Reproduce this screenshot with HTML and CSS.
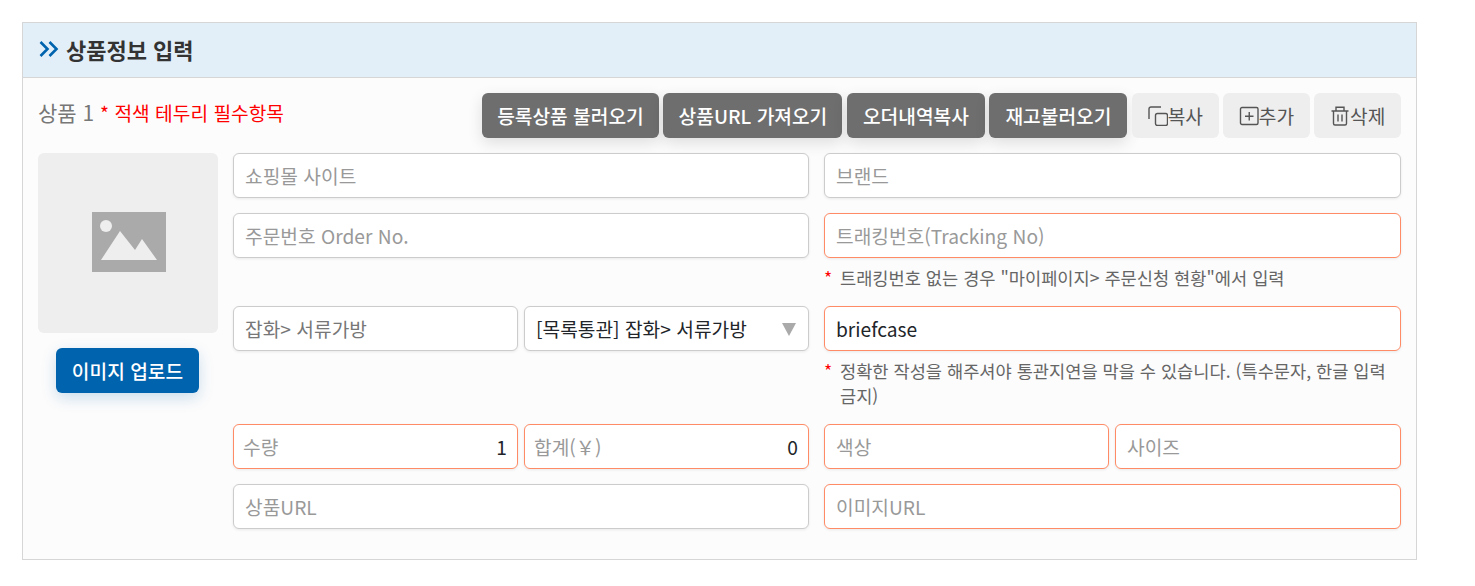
FILE: index.html
```html
<!DOCTYPE html>
<html lang="ko">
<head>
  <meta charset="UTF-8">
  <meta name="viewport" content="width=device-width, initial-scale=1.0">
  <title>상품정보 입력</title>
  <link rel="stylesheet" href="styles.css">
</head>
<body>
  <section class="panel">
    <h2 class="panel-title">
      <svg class="title-icon" viewBox="0 0 20 16" width="20" height="16" aria-hidden="true">
        <path d="M1.500 1 8.500 8 1.500 15M10.500 1 17.500 8l-7 7" fill="none" stroke="#0063ad" stroke-width="2.600"/>
      </svg>
      상품정보 입력
    </h2>

    <div class="panel-body">
      <div class="item-head">
        <p class="item-name">상품 1 <span class="required">* 적색 테두리 필수항목</span></p>
        <div class="button-row">
          <button class="btn btn-dark">등록상품 불러오기</button>
          <button class="btn btn-dark">상품URL 가져오기</button>
          <button class="btn btn-dark">오더내역복사</button>
          <button class="btn btn-dark">재고불러오기</button>
          <button class="btn btn-light">
            <svg viewBox="0 0 20 20" width="20" height="20" aria-hidden="true">
              <path d="M1 13V3a2 2 0 0 1 2-2h10" fill="none" stroke="#555" stroke-width="1.400"/>
              <rect x="7.500" y="7.500" width="12" height="12" rx="2" fill="none" stroke="#555" stroke-width="1.400"/>
            </svg>복사
          </button>
          <button class="btn btn-light">
            <svg viewBox="0 0 20 20" width="20" height="20" aria-hidden="true">
              <rect x="1.500" y="1.500" width="17.500" height="17" rx="1.500" fill="none" stroke="#555" stroke-width="1.400"/>
              <path d="M10.250 6v8.500M6 10.250h8.500" fill="none" stroke="#555" stroke-width="1.400"/>
            </svg>추가
          </button>
          <button class="btn btn-light">
            <svg viewBox="0 0 20 20" width="20" height="20" aria-hidden="true">
              <path d="M1.500 5h17M6 5V1.200h8V5M3.500 5v12.500a1.500 1.500 0 0 0 1.500 1.500h10a1.500 1.500 0 0 0 1.500-1.500V5M8 8.500v7M12 8.500v7" fill="none" stroke="#555" stroke-width="1.400"/>
            </svg>삭제
          </button>
        </div>
      </div>

      <div class="item-main">
        <div class="photo-col">
          <div class="photo-box">
            <svg viewBox="0 0 74 60" width="74" height="60" aria-hidden="true">
              <path fill="#aaa" fill-rule="evenodd" d="M0 0h74v60H0zM9 48h56L50 27l-7 11-15-19z"/>
              <circle cx="14" cy="14" r="6" fill="#eee"/>
            </svg>
          </div>
          <button class="btn-upload">이미지 업로드</button>
        </div>

        <div class="fields">
          <input class="field" placeholder="쇼핑몰 사이트">
          <input class="field" placeholder="브랜드">

          <input class="field" placeholder="주문번호 Order No.">
          <div>
            <input class="field field-req" placeholder="트래킹번호(Tracking No)">
            <p class="hint"><span class="star">*</span><span>트래킹번호 없는 경우 "마이페이지&gt; 주문신청 현황"에서 입력</span></p>
          </div>

          <div class="pair">
            <input class="field field-cat" value="잡화&gt; 서류가방">
            <div class="select-wrap">
              <select class="field field-select">
                <option>[목록통관] 잡화&gt; 서류가방</option>
              </select>
            </div>
          </div>
          <div>
            <input class="field field-req field-value" value="briefcase">
            <p class="hint"><span class="star">*</span><span>정확한 작성을 해주셔야 통관지연을 막을 수 있습니다. (특수문자, 한글 입력 금지)</span></p>
          </div>

          <div class="pair">
            <label class="field field-req amount"><span>수량</span><b>1</b></label>
            <label class="field field-req amount"><span>합계(￥)</span><b>0</b></label>
          </div>
          <div class="pair">
            <input class="field field-req" placeholder="색상">
            <input class="field field-req" placeholder="사이즈">
          </div>

          <input class="field" placeholder="상품URL">
          <input class="field field-req" placeholder="이미지URL">
        </div>
      </div>
    </div>
  </section>
</body>
</html>
```

FILE: styles.css
```css
* {
  box-sizing: border-box;
}

body {
  margin: 0;
  padding: 22px 58px 0 22px;
  background-color: #fff;
  font-family: "Noto Sans CJK KR", "Noto Sans", sans-serif;
  color: #212529;
}

.panel {
  border: 1px solid #d6d6d6;
  background-color: #fcfcfc;
}

.panel-title {
  display: flex;
  align-items: center;
  gap: 7px;
  height: 55px;
  margin: 0;
  padding: 0 0 2px 16px;
  background-color: #e2eff9;
  border-bottom: 1px solid #d6d6d6;
  color: #333;
  font-size: 22px;
  font-weight: 700;
}

.panel-body {
  padding: 15px 15px 30px;
}

.item-head {
  display: flex;
  justify-content: space-between;
  margin-bottom: 15px;
}

.item-name {
  margin: 0;
  color: #777;
  font-size: 21px;
  line-height: 38px;
}

.required {
  color: #f00;
  font-size: 19.200px;
}

.button-row {
  display: flex;
  gap: 4.500px;
}

.btn {
  display: inline-flex;
  align-items: center;
  justify-content: center;
  height: 45px;
  border: 0;
  border-radius: 6px;
  font-family: inherit;
  font-size: 19.200px;
  white-space: nowrap;
}

.btn-dark {
  min-width: 138px;
  padding: 0 15.200px;
  background-color: #6e6e6e;
  box-shadow: 0 5px 15px rgba(0, 0, 0, .12);
  color: #fff;
  font-weight: 500;
}

.btn-light {
  padding: 0 15.700px;
  background-color: #eee;
  color: #555;
}

.item-main {
  display: flex;
  gap: 15px;
}

.photo-col {
  display: flex;
  flex-direction: column;
  gap: 15px;
  flex: 0 0 180px;
}

.photo-box {
  display: flex;
  align-items: center;
  justify-content: center;
  width: 180px;
  height: 180px;
  padding: 0 0 2px 2px;
  border-radius: 6px;
  background-color: #eee;
}

.btn-upload {
  width: 143px;
  height: 45px;
  margin-left: 18px;
  border: 0;
  border-radius: 6px;
  background-color: #0063ad;
  box-shadow: 0 5px 15px rgba(0, 99, 173, .2);
  color: #fff;
  font-family: inherit;
  font-size: 19.200px;
  font-weight: 500;
}

.fields {
  display: grid;
  grid-template-columns: 576px 1fr;
  gap: 15px;
  flex: 1;
  align-items: start;
}

.pair {
  display: grid;
  grid-template-columns: 285px 1fr;
  gap: 6px;
}

.field {
  display: block;
  width: 100%;
  height: 45px;
  padding: 1px 11px 0;
  border: 1px solid #ccc;
  border-radius: 6px;
  outline: 0;
  background-color: #fff;
  box-shadow: 0 1px 3px rgba(0, 0, 0, .08);
  color: #212529;
  font-family: inherit;
  font-size: 19.200px;
}

.field::placeholder {
  color: #999;
}

.field-req {
  border-color: #ff8b66;
}

.field-cat {
  color: #777;
}

.select-wrap {
  position: relative;
}

.select-wrap::after {
  content: "";
  position: absolute;
  top: 17px;
  right: 13px;
  border-top: 13px solid #aaa;
  border-left: 7px solid transparent;
  border-right: 7px solid transparent;
}

.field-select {
  appearance: none;
  -webkit-appearance: none;
}

.amount {
  display: flex;
  align-items: center;
  justify-content: space-between;
  padding: 1px 10px 0 9px;
}

.amount span {
  color: #999;
}

.amount b {
  font-weight: 400;
}

.hint {
  display: flex;
  margin: 7px 0 0;
  color: #666;
  font-size: 17.600px;
  line-height: 25.500px;
}

.star {
  flex: 0 0 16px;
  color: #f00;
}
```
